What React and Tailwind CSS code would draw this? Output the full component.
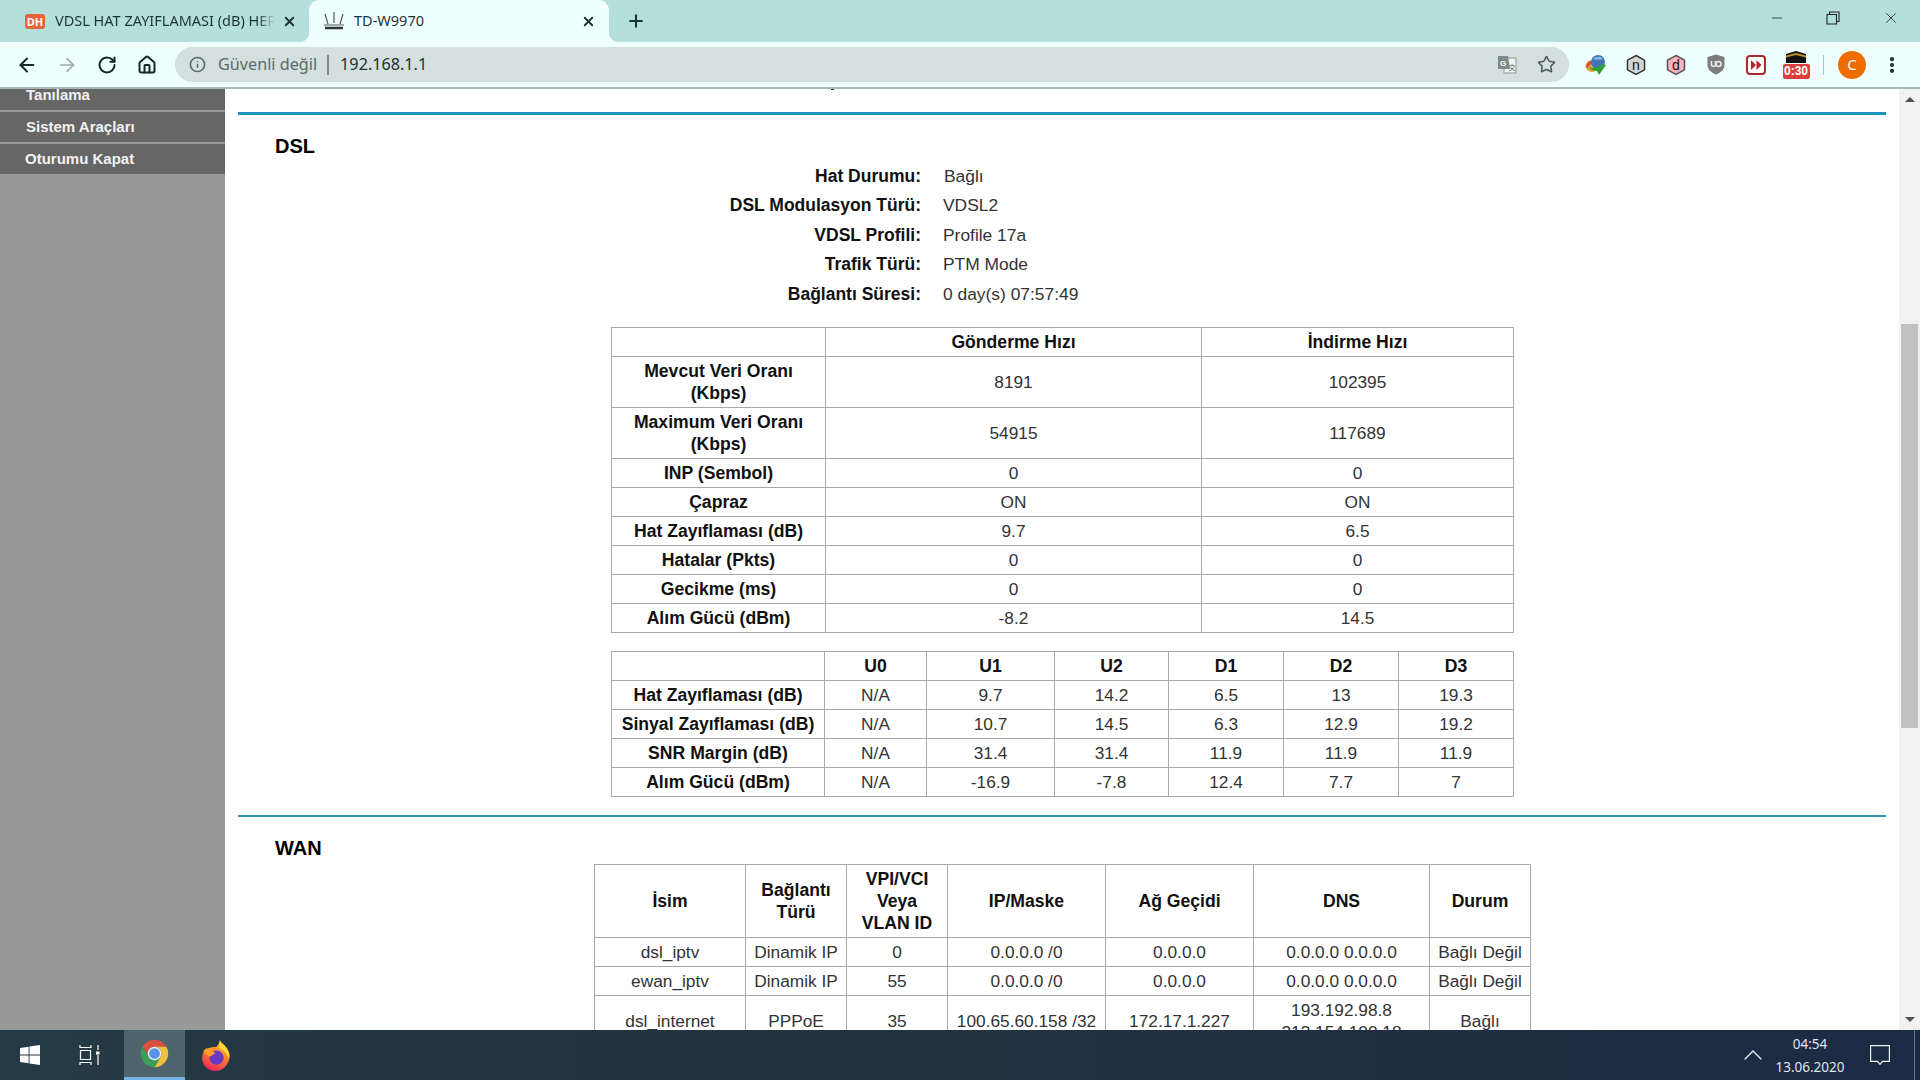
import React from 'react';
import { ArrowLeft, ArrowRight, RotateCw, Home, Info, Star, X, Plus, Minus, MoreVertical, ChevronUp } from 'lucide-react';

const cell = 'border border-[#a8a8a8] text-center align-middle px-[2px] py-0 leading-[22px] text-[17.300px] text-[#333] font-normal';
const head = 'border border-[#a8a8a8] text-center align-middle px-[1px] py-0 leading-[22px] text-[17.600px] text-[#111] font-bold';

function Row({ h, cells, boldAll }) {
  const hc = h === 51 ? 'h-[51px]' : h === 73 ? 'h-[73px]' : 'h-[29px]';
  return (
    <tr className={hc}>
      {cells.map((c, i) => {
        const bold = boldAll || i === 0;
        const text = Array.isArray(c) ? c.map((l, j) => <div key={j}>{l}</div>) : c;
        return bold ? <th key={i} className={head}>{text}</th> : <td key={i} className={cell}>{text}</td>;
      })}
    </tr>
  );
}

function Info2({ label, value, nudge }) {
  return (
    <div className="flex h-[29.500px] items-center">
      <div className="w-[696px] text-right text-[17.500px] font-bold text-[#111]">{label}</div>
      <div className={nudge ? 'ml-[23px] text-[17.400px] text-[#333]' : 'ml-[22px] text-[17.400px] text-[#333]'}>{value}</div>
    </div>
  );
}

const Hexagon = ({ fill, stroke, letter }) => (
  <svg width="20" height="22" viewBox="0 0 20 22">
    <path d="M10 1.500 18.500 6.200v9.600L10 20.500 1.500 15.800V6.200Z" fill={fill} stroke={stroke} strokeWidth="1.500" />
    <text x="10" y="15.500" textAnchor="middle" fontSize="14" fontFamily="Liberation Sans" fill="#111">{letter}</text>
  </svg>
);

const Idm = () => (
  <svg width="24" height="22" viewBox="0 0 24 22">
    <ellipse cx="8" cy="12" rx="6.500" ry="6" fill="#e2a33a" />
    <path d="M2 13c1-5 5-7 8-6l-2 3c-2 0-3 1-4 4Z" fill="#d8483a" />
    <circle cx="14" cy="8" r="7" fill="#3f74b8" />
    <path d="M9 5c3-3 8-3 10 0-3 1-7 1-10 0Z" fill="#8fb8e0" />
    <path d="M5 13c4 2 8 1 14-3l3 1-7 10-2-4c-3 0-6-1-8-4Z" fill="#2f9e35" />
  </svg>
);

const Shield = () => (
  <svg width="18" height="21" viewBox="0 0 18 21">
    <path d="M9 .5 17.500 3v8c0 4.500-3.500 7.500-8.500 9.500C4 18.500.5 15.500.5 11V3Z" fill="#7d7d7d" />
    <path d="M4.500 7v3.500a2 2 0 0 0 4 0V7" fill="none" stroke="#eee" strokeWidth="1.500" />
    <circle cx="11.500" cy="10" r="2.500" fill="none" stroke="#eee" strokeWidth="1.500" />
  </svg>
);

const FastForward = () => (
  <svg width="20" height="20" viewBox="0 0 20 20">
    <rect x="1" y="1" width="18" height="18" rx="3" fill="#fff" stroke="#a8292e" strokeWidth="2" />
    <path d="M5 5l5 5-5 5Z M10.500 5l5 5-5 5Z" fill="#b7222a" />
  </svg>
);

const Translate = () => (
  <svg width="20" height="20" viewBox="0 0 20 20">
    <rect x="7" y="3" width="12" height="15" fill="#eef3f2" stroke="#8b9695" strokeWidth="1" />
    <path d="M1 1h10l2 13H1Z" fill="#7f8b8a" />
    <text x="6" y="11" textAnchor="middle" fontSize="8" fontWeight="700" fontFamily="Liberation Sans" fill="#fff">G</text>
    <text x="15" y="15" textAnchor="middle" fontSize="7" fontFamily="Noto Sans CJK SC" fill="#5d6968">文</text>
  </svg>
);

const Router = () => (
  <svg width="24" height="20" viewBox="0 0 24 20" fill="none" stroke="#4e5a5a" strokeWidth="1.200">
    <path d="M3 3l3 10M12 1v11M21 3l-3 10M2 14h20" />
    <path d="M3 17h18" stroke="#333" strokeWidth="2.500" />
  </svg>
);

const ChromeIcon = () => (
  <svg width="33" height="33" viewBox="0 0 24 24">
    <path d="M3.340 7A10 10 0 0 1 20.660 7H12A5 5 0 0 0 7.670 14.500Z" fill="#d9503f" />
    <path d="M20.660 7A10 10 0 0 1 12 22L16.330 14.500A5 5 0 0 0 12 7Z" fill="#f1c13e" />
    <path d="M3.340 7 7.670 14.500A5 5 0 0 0 16.330 14.500L12 22A10 10 0 0 1 3.340 7Z" fill="#3a9f55" />
    <circle cx="12" cy="12" r="5" fill="#e6edf4" />
    <circle cx="12" cy="12" r="3.900" fill="#5a92e8" />
  </svg>
);

const Firefox = () => (
  <svg width="33" height="33" viewBox="0 0 30 30">
    <defs>
      <linearGradient id="ffa" x1="0.700" y1="0" x2="0.300" y2="1">
        <stop offset="0" stopColor="#ffc42e" />
        <stop offset="0.500" stopColor="#ff7a2e" />
        <stop offset="1" stopColor="#f1245f" />
      </linearGradient>
    </defs>
    <path d="M18 1c1 3 4 4 6 7 3 4 4 8 2 12-2 6-7 9-12 9C7 29 2 24 2 17c0-4 2-7 4-9l1 2c2-2 5-3 8-3 2-2 3-4 3-6Z" fill="url(#ffa)" />
    <path d="M18 1c1 3 4 4 6 7 2 3 3 6 2 10-1-4-4-8-9-10 1-2 1-5 1-7Z" fill="#ffd83a" />
    <circle cx="15" cy="17" r="6.500" fill="#6a3bc0" />
    <path d="M3 11c3-3 7-4 11-3l-3 3 3 2-5 3c-2-1-5-2-6-5Z" fill="#ff9a2e" />
  </svg>
);

const WindowsLogo = () => (
  <svg width="20" height="20" viewBox="0 0 20 20" fill="#fff">
    <path d="M0 3 8.600 1.700V9.500H0Z M9.500 1.600 20 0V9.500H9.500Z M0 10.500H8.600V18.300L0 17Z M9.500 10.500H20V20L9.500 18.400Z" />
  </svg>
);

const TaskView = () => (
  <svg width="22" height="20" viewBox="0 0 22 20" fill="none" stroke="#fff" strokeWidth="1.200">
    <path d="M1 0v2.500h11V0M1.500 5.500h10v9h-10Z M1 20v-2.500h11V20M19 0v5M19 10v10" />
    <rect x="17" y="6.500" width="3.500" height="3" fill="#fff" stroke="none" />
  </svg>
);

export default function App() {
  return (
    <div className="flex h-screen w-screen flex-col overflow-hidden bg-white font-['Liberation_Sans',sans-serif]">
      {/* Tab strip */}
      <div className="flex h-[42px] shrink-0 bg-[#b4dfdc] font-['Noto_Sans',sans-serif] text-[#1d3436]">
        <div className="flex w-[309px] items-center">
          <div className="ml-[25px] flex h-[15px] w-[20px] items-center justify-center rounded-[3px] bg-[#e8623a] text-[11px] font-bold leading-none text-white">DH</div>
          <div className="ml-[10px] w-[220px] overflow-hidden whitespace-nowrap text-[14.500px] [mask-image:linear-gradient(to_right,black_92%,transparent)]">VDSL HAT ZAYIFLAMASI (dB) HER KOŞULDA</div>
          <X className="ml-[7px]" size={15} strokeWidth={3} color="#1d3436" />
        </div>
        <div className="relative flex w-[300px] items-center rounded-t-[10px] bg-[#effffe]">
          <div className="absolute bottom-0 left-[-10px] h-[10px] w-[10px] bg-[radial-gradient(circle_at_0_0,transparent_10px,#effffe_10.500px)]" />
          <div className="absolute bottom-0 right-[-10px] h-[10px] w-[10px] bg-[radial-gradient(circle_at_100%_0,transparent_10px,#effffe_10.500px)]" />
          <div className="ml-[13px]"><Router /></div>
          <div className="ml-[8px] flex-1 text-[14.500px]">TD-W9970</div>
          <X className="mr-[13px]" size={15} strokeWidth={3} color="#1d3436" />
        </div>
        <div className="ml-[17px] flex items-center"><Plus size={20} strokeWidth={2.500} color="#1d3436" /></div>
        <div className="flex-1" />
        <div className="mb-[6px] flex items-center pr-[20px]">
          <Minus size={16} strokeWidth={1.200} color="#222" />
          <svg className="ml-[41px]" width="14" height="14" viewBox="0 0 14 14" fill="none" stroke="#222" strokeWidth="1.100"><path d="M1 3.500h9.500V13H1Z M3.500 3.500V1H13v9.500h-2.500" /></svg>
          <X className="ml-[42px]" size={18} strokeWidth={1.100} color="#222" />
        </div>
      </div>

      {/* Toolbar */}
      <div className="flex h-[45px] shrink-0 items-center bg-[#effffe] pl-[7px]">
        <div className="flex w-[40px] justify-center"><ArrowLeft size={22} strokeWidth={2.200} color="#16282a" /></div>
        <div className="flex w-[40px] justify-center"><ArrowRight size={22} strokeWidth={1.800} color="#9aa8a7" /></div>
        <div className="flex w-[40px] justify-center"><RotateCw size={20} strokeWidth={2.400} color="#16282a" /></div>
        <div className="flex w-[40px] justify-center"><Home size={20} strokeWidth={2.400} color="#16282a" /></div>
        <div className="ml-[8px] flex h-[35px] w-[1394px] items-center rounded-full bg-[#d3e0df] font-['Noto_Sans',sans-serif]">
          <Info className="ml-[14px]" size={17} strokeWidth={2.200} color="#5a6867" />
          <span className="ml-[12px] text-[16.200px] text-[#5c6a69]">Güvenli değil</span>
          <span className="ml-[10px] h-[20px] w-[2px] bg-[#7d8a89]" />
          <span className="ml-[11px] text-[16.200px] text-[#1f2f30]">192.168.1.1</span>
          <div className="flex-1" />
          <Translate />
          <Star className="ml-[20px] mr-[13px]" size={19} strokeWidth={2} color="#4f5c5b" />
        </div>
        <div className="ml-[7px] flex w-[40px] justify-center"><Idm /></div>
        <div className="flex w-[40px] justify-center"><Hexagon fill="#d4d4d4" stroke="#333" letter="n" /></div>
        <div className="flex w-[40px] justify-center"><Hexagon fill="#f6b3c4" stroke="#555" letter="d" /></div>
        <div className="flex w-[40px] justify-center"><Shield /></div>
        <div className="flex w-[40px] justify-center"><FastForward /></div>
        <div className="flex w-[40px] flex-col items-center">
          <svg width="20" height="12" viewBox="0 0 20 12"><path d="M0 3 10 0l10 3v9H0Z" fill="#111" /><path d="M0 4.500 10 2l10 2.500v2L10 4 0 6.500Z" fill="#b8902b" /></svg>
          <div className="mt-[1px] flex h-[15px] w-[27px] items-center justify-center rounded-[2px] bg-[#d9413f] text-[12px] font-bold leading-none text-white">0:30</div>
        </div>
        <div className="ml-[7px] h-[20px] w-px bg-[#b5c0bf]" />
        <div className="ml-[14px] flex h-[28px] w-[28px] items-center justify-center rounded-full bg-[#ee6c00] font-['Noto_Sans',sans-serif] text-[15px] text-white">C</div>
        <div className="ml-[16px]"><MoreVertical size={20} strokeWidth={3} color="#16282a" /></div>
      </div>
      <div className="h-[2px] shrink-0 bg-[#a9b7b5]" />

      {/* Body */}
      <div className="flex min-h-0 flex-1 overflow-hidden">
        <aside className="w-[225px] shrink-0 overflow-hidden bg-[#999999] text-[15px] font-bold text-[#f2f2f2]">
          <div className="-mt-[9px] flex h-[30px] items-center bg-[#666666] pl-[26px]">Tanılama</div>
          <div className="mt-[2px] flex h-[30px] items-center bg-[#666666] pl-[26px]">Sistem Araçları</div>
          <div className="mt-[2px] flex h-[30px] items-center bg-[#666666] pl-[25px]">Oturumu Kapat</div>
        </aside>

        <main className="min-w-0 flex-1 overflow-hidden">
          <div className="ml-[606px] h-[1px] w-[3px] bg-[#333]" />
          <div className="mx-[13px] mt-[22px] h-[3px] bg-[#1a96bd]" />
          <div className="ml-[50px] h-[46px] pt-[19px] text-[20px] font-bold leading-[24px] text-black">DSL</div>
          <Info2 label="Hat Durumu:" value="Bağlı" nudge />
          <Info2 label="DSL Modulasyon Türü:" value="VDSL2" />
          <Info2 label="VDSL Profili:" value="Profile 17a" />
          <Info2 label="Trafik Türü:" value="PTM Mode" />
          <Info2 label="Bağlantı Süresi:" value="0 day(s) 07:57:49" />

          <table className="ml-[386px] mt-[18.500px] w-[902px] table-fixed border-collapse">
            <colgroup><col className="w-[214px]" /><col className="w-[376px]" /><col className="w-[312px]" /></colgroup>
            <tbody>
              <Row boldAll cells={['', 'Gönderme Hızı', 'İndirme Hızı']} />
              <Row h={51} cells={[['Mevcut Veri Oranı', '(Kbps)'], '8191', '102395']} />
              <Row h={51} cells={[['Maximum Veri Oranı', '(Kbps)'], '54915', '117689']} />
              <Row cells={['INP (Sembol)', '0', '0']} />
              <Row cells={['Çapraz', 'ON', 'ON']} />
              <Row cells={['Hat Zayıflaması (dB)', '9.7', '6.5']} />
              <Row cells={['Hatalar (Pkts)', '0', '0']} />
              <Row cells={['Gecikme (ms)', '0', '0']} />
              <Row cells={['Alım Gücü (dBm)', '-8.2', '14.5']} />
            </tbody>
          </table>

          <table className="ml-[386px] mt-[18px] w-[902px] table-fixed border-collapse">
            <colgroup>
              <col className="w-[213px]" /><col className="w-[102px]" /><col className="w-[128px]" /><col className="w-[114px]" /><col className="w-[115px]" /><col className="w-[115px]" /><col className="w-[115px]" />
            </colgroup>
            <tbody>
              <Row boldAll cells={['', 'U0', 'U1', 'U2', 'D1', 'D2', 'D3']} />
              <Row cells={['Hat Zayıflaması (dB)', 'N/A', '9.7', '14.2', '6.5', '13', '19.3']} />
              <Row cells={['Sinyal Zayıflaması (dB)', 'N/A', '10.7', '14.5', '6.3', '12.9', '19.2']} />
              <Row cells={['SNR Margin (dB)', 'N/A', '31.4', '31.4', '11.9', '11.9', '11.9']} />
              <Row cells={['Alım Gücü (dBm)', 'N/A', '-16.9', '-7.8', '12.4', '7.7', '7']} />
            </tbody>
          </table>

          <div className="mx-[13px] mt-[18px] h-[2px] bg-[#2a8fa8]" />
          <div className="ml-[50px] h-[47px] pt-[19px] text-[20px] font-bold leading-[24px] text-black">WAN</div>

          <table className="ml-[369px] w-[936px] table-fixed border-collapse">
            <colgroup>
              <col className="w-[151px]" /><col className="w-[101px]" /><col className="w-[101px]" /><col className="w-[158px]" /><col className="w-[148px]" /><col className="w-[176px]" /><col className="w-[101px]" />
            </colgroup>
            <tbody>
              <Row h={73} boldAll cells={['İsim', ['Bağlantı', 'Türü'], ['VPI/VCI', 'Veya', 'VLAN ID'], 'IP/Maske', 'Ağ Geçidi', 'DNS', 'Durum']} />
              <tr className="h-[29px]">
                {['dsl_iptv', 'Dinamik IP', '0', '0.0.0.0 /0', '0.0.0.0', '0.0.0.0 0.0.0.0', 'Bağlı Değil'].map((c, i) => <td key={i} className={cell}>{c}</td>)}
              </tr>
              <tr className="h-[29px]">
                {['ewan_iptv', 'Dinamik IP', '55', '0.0.0.0 /0', '0.0.0.0', '0.0.0.0 0.0.0.0', 'Bağlı Değil'].map((c, i) => <td key={i} className={cell}>{c}</td>)}
              </tr>
              <tr className="h-[51px]">
                {['dsl_internet', 'PPPoE', '35', '100.65.60.158 /32', '172.17.1.227'].map((c, i) => <td key={i} className={cell}>{c}</td>)}
                <td className={cell}><div>193.192.98.8</div><div>213.154.100.18</div></td>
                <td className={cell}>Bağlı</td>
              </tr>
            </tbody>
          </table>
        </main>

        <div className="flex w-[21px] shrink-0 flex-col items-center bg-[#f1f1f1]">
          <div className="mt-[8px] h-0 w-0 border-x-[5px] border-b-[5px] border-x-transparent border-b-[#505050]" />
          <div className="mt-[222px] h-[404px] w-[17px] bg-[#c1c1c1]" />
          <div className="mb-[8px] mt-auto h-0 w-0 border-x-[5px] border-t-[5px] border-x-transparent border-t-[#505050]" />
        </div>
      </div>

      {/* Taskbar */}
      <div className="flex h-[50px] shrink-0 items-center bg-gradient-to-r from-[#243a44] via-[#22323f] to-[#1c2a44]">
        <div className="flex w-[60px] justify-center"><WindowsLogo /></div>
        <div className="mr-[4px] flex w-[60px] justify-center"><TaskView /></div>
        <div className="flex h-full w-[61px] items-center justify-center border-b-[3px] border-b-[#76b5e2] bg-[#4d646c]"><ChromeIcon /></div>
        <div className="flex w-[62px] justify-center"><Firefox /></div>
        <div className="flex-1" />
        <div className="flex w-[20px] justify-center"><ChevronUp className="shrink-0" size={32} strokeWidth={1} color="#e6ebef" /></div>
        <div className="ml-[7px] w-[80px] pt-[2px] text-center font-['Noto_Sans',sans-serif] text-[13.500px] leading-[23px] text-[#dfe5ea]">
          <div>04:54</div>
          <div>13.06.2020</div>
        </div>
        <div className="flex w-[60px] justify-center">
          <svg width="20" height="21" viewBox="0 0 20 21" fill="none" stroke="#f0f3f5" strokeWidth="1.200"><path d="M.6.6h18.800v15.800h-7l-2.400 3-2.400-3h-7Z" /></svg>
        </div>
        <div className="ml-[4px] h-full w-[6px] border-l border-l-[#6b7a88]" />
      </div>
    </div>
  );
}
